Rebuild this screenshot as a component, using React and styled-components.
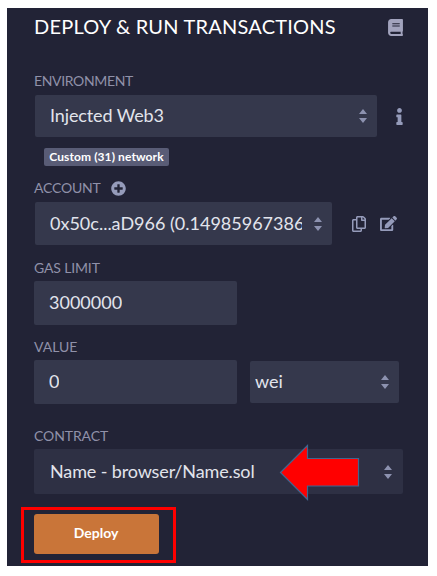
import React from "react";
import styled, { createGlobalStyle } from "styled-components";
import { FaBook, FaInfo, FaPlusCircle, FaRegCopy, FaEdit } from "react-icons/fa";

const GlobalStyle = createGlobalStyle`
  * { box-sizing: border-box; }
  body {
    margin: 0;
    background: #fff;
    font-family: Lato, "Open Sans", sans-serif;
  }
`;

const Panel = styled.main`
  width: 421px;
  height: 558px;
  margin: 8px 0 0 7px;
  padding: 5px 25px 0 27px;
  background: #222336;
  color: #a2a3bd;
`;

const Header = styled.header`
  display: flex;
  align-items: center;
  justify-content: space-between;
  height: 28px;
  svg { display: block; color: #a2a3bd; margin-right: -1px; }
`;

const Title = styled.h1`
  margin: 0;
  padding-bottom: 2px;
  font-size: 20px;
  line-height: 26px;
  font-weight: 400;
  color: #fff;
  white-space: nowrap;
  letter-spacing: ${(p) => p.$spacing}px;
`;

const Label = styled.label`
  display: flex;
  align-items: center;
  gap: 10px;
  height: 20px;
  margin-top: ${(p) => p.$top}px;
  font-size: 14px;
  line-height: 20px;
  color: #9091a9;
  svg { color: #959bba; }
`;

const LabelText = styled.span`
  letter-spacing: ${(p) => p.$spacing || 0}px;
`;

const Row = styled.div`
  display: flex;
  align-items: center;
  margin-top: ${(p) => p.$top}px;
  margin-left: ${(p) => p.$left || 0}px;
`;

const Field = styled.div`
  display: flex;
  align-items: center;
  flex: none;
  width: ${(p) => p.$width}px;
  height: ${(p) => p.$height}px;
  padding: 0 ${(p) => p.$end ?? 10}px 0 ${(p) => p.$pad ?? 15}px;
  border-radius: 2px;
  background: ${(p) => p.$tone || "#35384c"};
  color: #e2e4ec;
  font-size: 18px;
  svg { flex: none; margin-left: auto; }
`;

const FieldText = styled.span`
  max-width: 252px;
  overflow: hidden;
  white-space: nowrap;
  line-height: 24px;
  padding-bottom: 2px;
  letter-spacing: ${(p) => p.$spacing || 0}px;
`;

const Badge = styled.span`
  display: block;
  width: 125px;
  height: 18px;
  margin: 11px 0 0 10px;
  border-radius: 2px;
  background: #595c76;
  color: #fff;
  font-size: 12px;
  font-weight: 700;
  line-height: 18px;
  text-align: center;
  letter-spacing: ${(p) => p.$spacing}px;
`;

const Action = styled.span`
  display: flex;
  margin-left: ${(p) => p.$gap}px;
  color: #959bba;
`;

const ContractRow = styled.div`
  position: relative;
  margin-top: 3px;
`;

const Pointer = styled.svg`
  position: absolute;
  left: 245px;
  top: -5px;
`;

const Highlight = styled.div`
  width: 155px;
  height: 56px;
  margin: 13px 0 0 -13px;
  padding: 4px 10px;
  border: 3px solid #ff0000;
`;

const DeployButton = styled.button`
  display: block;
  width: 125px;
  height: 40px;
  padding: 0 1px 2px 0;
  border: 0;
  border-radius: 3px;
  background: #c97539;
  color: #fff;
  font: 700 14px/38px Lato, sans-serif;
  letter-spacing: ${(p) => p.$spacing}px;
`;

const Carets = () => (
  <svg width="8" height="14" viewBox="0 0 8 14" fill="#8d92b0">
    <path d="M0 5 4 0 8 5Z M0 9H8L4 14Z" />
  </svg>
);

export default function App() {
  return (
    <>
      <GlobalStyle />
      <Panel>
        <Header>
          <Title $spacing={0.21}>DEPLOY &amp; RUN TRANSACTIONS</Title>
          <FaBook size={17} />
        </Header>

        <Label $top={30}><LabelText $spacing={-0.35}>ENVIRONMENT</LabelText></Label>
        <Row $top={4} $left={1}>
          <Field $width={342} $height={42}>
            <FieldText $spacing={-0.12}>Injected Web3</FieldText>
            <Carets />
          </Field>
          <Action $gap={14}><FaInfo size={17} /></Action>
        </Row>
        <Badge $spacing={0.1}>Custom (31) network</Badge>

        <Label $top={12}>
          <LabelText $spacing={-0.2}>ACCOUNT</LabelText>
          <FaPlusCircle size={15} />
        </Label>
        <Row $top={4} $left={1}>
          <Field $width={297} $height={43}>
            <FieldText>0x50c...aD966 (0.14985967386</FieldText>
            <Carets />
          </Field>
          <Action $gap={19}><FaRegCopy size={16} /></Action>
          <Action $gap={13}><FaEdit size={17} /></Action>
        </Row>

        <Label $top={13}><LabelText $spacing={-0.15}>GAS LIMIT</LabelText></Label>
        <Row $top={3}>
          <Field $width={203} $height={44}><FieldText>3000000</FieldText></Field>
        </Row>

        <Label $top={12}><LabelText>VALUE</LabelText></Label>
        <Row $top={3}>
          <Field $width={203} $height={44}><FieldText>0</FieldText></Field>
          <Row $top={0} $left={13}>
            <Field $width={149} $height={42} $pad={5}>
              <FieldText>wei</FieldText>
              <Carets />
            </Field>
          </Row>
        </Row>

        <Label $top={22}><LabelText $spacing={-0.1}>CONTRACT</LabelText></Label>
        <ContractRow>
          <Field $width={369} $height={45} $pad={16} $end={11} $tone="#2e3044">
            <FieldText $spacing={-0.13}>Name - browser/Name.sol</FieldText>
            <Carets />
          </Field>
          <Pointer width="82" height="58" viewBox="0 0 82 58">
            <path
              d="M1.5 28.5 28.5 1.5V14.5H79.5V42H28.5V55.5Z"
              fill="#ff0000"
              stroke="#41658f"
              strokeWidth="1.2"
            />
          </Pointer>
        </ContractRow>

        <Highlight>
          <DeployButton $spacing={0}>Deploy</DeployButton>
        </Highlight>
      </Panel>
    </>
  );
}
